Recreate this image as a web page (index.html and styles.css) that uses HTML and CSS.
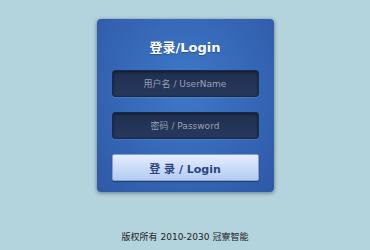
FILE: index.html
```html
<!DOCTYPE html>
<html lang="zh">
<head>
  <meta charset="UTF-8">
  <title>登录</title>
  <link rel="stylesheet" href="styles.css">
</head>
<body>
  <div class="login-box">
    <h1>登录/Login</h1>
    <input type="text" class="field" placeholder="用户名 / UserName">
    <input type="password" class="field" placeholder="密码 / Password">
    <button class="login-btn">登 录 / Login</button>
  </div>
  <p class="footer">版权所有 2010-2030 冠寮智能</p>
</body>
</html>
```

FILE: styles.css
```css
body { margin: 0; background: #b3d4dd; font-family: "DejaVu Sans", "Noto Sans CJK SC", sans-serif; padding-top: 19px; }
.login-box { width: 177px; height: 173px; margin: 0 auto; box-sizing: border-box; padding: 21px 15px 0 15px; border-radius: 4px; background: radial-gradient(ellipse at 50% 40%, #3f78c8 0%, #3465b4 60%, #2e59a6 100%); box-shadow: 0 1px 4px rgba(0,0,0,0.45); display: flex; flex-direction: column; align-items: stretch; }
.login-box h1 { margin: 0 0 14px 0; color: #fff; font-size: 13px; font-weight: bold; text-align: center; line-height: 16px; text-shadow: 0 1px 1px rgba(0,0,0,0.3); }
.field { height: 27px; box-sizing: border-box; margin: 0 0 15px 0; border: 1px solid #1a2a48; border-radius: 3px; background: linear-gradient(#1f2f50, #26395d); color: #ddd; text-align: center; font-family: "DejaVu Sans", "Noto Sans CJK SC", sans-serif; font-size: 9px; box-shadow: inset 0 1px 3px rgba(0,0,0,0.5), 0 1px 0 rgba(255,255,255,0.1); outline: none; }
.field::placeholder { color: #98a2b4; }
.login-btn { height: 27px; margin-top: 0; border: 1px solid #8aa0c8; border-radius: 2px; background: linear-gradient(#e4edfc, #b3cbf3); color: #2a4680; font-family: "DejaVu Sans", "Noto Sans CJK SC", sans-serif; font-size: 11px; font-weight: bold; box-shadow: 0 1px 1px rgba(0,0,0,0.35); cursor: pointer; }
.footer { margin: 38px 0 0 0; text-align: center; font-size: 9px; color: #222; }
```
